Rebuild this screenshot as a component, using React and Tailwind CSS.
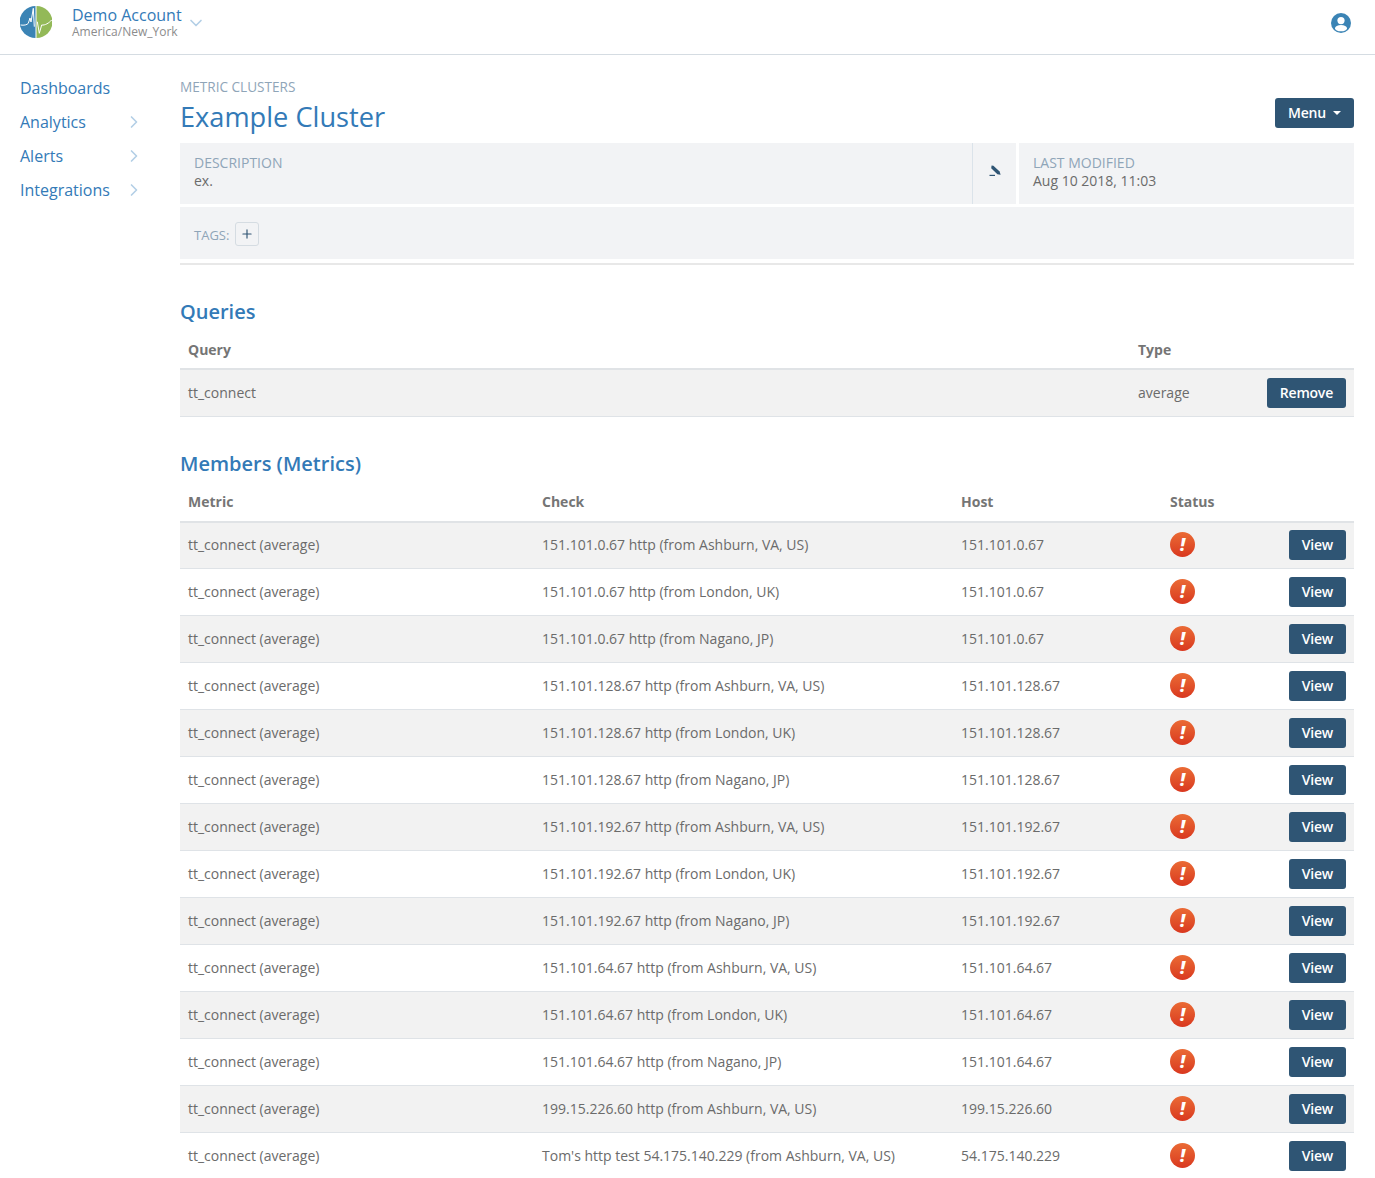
import React from 'react';
import { ChevronDown, ChevronRight, Plus } from 'lucide-react';

const members = [
  ['151.101.0.67 http (from Ashburn, VA, US)', '151.101.0.67'],
  ['151.101.0.67 http (from London, UK)', '151.101.0.67'],
  ['151.101.0.67 http (from Nagano, JP)', '151.101.0.67'],
  ['151.101.128.67 http (from Ashburn, VA, US)', '151.101.128.67'],
  ['151.101.128.67 http (from London, UK)', '151.101.128.67'],
  ['151.101.128.67 http (from Nagano, JP)', '151.101.128.67'],
  ['151.101.192.67 http (from Ashburn, VA, US)', '151.101.192.67'],
  ['151.101.192.67 http (from London, UK)', '151.101.192.67'],
  ['151.101.192.67 http (from Nagano, JP)', '151.101.192.67'],
  ['151.101.64.67 http (from Ashburn, VA, US)', '151.101.64.67'],
  ['151.101.64.67 http (from London, UK)', '151.101.64.67'],
  ['151.101.64.67 http (from Nagano, JP)', '151.101.64.67'],
  ['199.15.226.60 http (from Ashburn, VA, US)', '199.15.226.60'],
  ["Tom's http test 54.175.140.229 (from Ashburn, VA, US)", '54.175.140.229'],
];

const Logo = () => (
  <svg width="32" height="32" viewBox="0 0 32 32">
    <path d="M15.5 0A16 16 0 0 0 15.5 32Z" fill="#3b84b5" />
    <path d="M16.5 0A16 16 0 0 1 16.5 32Z" fill="#93b958" />
    <path d="M0.5 19C4 19.5 7 19 8.3 17.3L10 12L11 16L13.3 2.3L14.3 20.7" fill="none" stroke="#fff" strokeWidth="1" />
    <path d="M17.3 15.7L19.3 27.3L21.7 19C25 19.5 29 17 31.7 14" fill="none" stroke="#fff" strokeWidth="1" />
  </svg>
);

const UserIcon = () => (
  <svg width="20" height="20" viewBox="0 0 20 20">
    <circle cx="10" cy="10" r="10" fill="#3b84b5" />
    <circle cx="10" cy="7.6" r="3.6" fill="#fff" />
    <ellipse cx="10" cy="15.2" rx="6" ry="3.1" fill="#fff" />
  </svg>
);

const PenIcon = () => (
  <svg width="12" height="12" viewBox="0 0 12 12" fill="#2f5574">
    <path d="M2.6 0.6L4.4 0.8L10.6 6.6L11.6 9.8L8.4 9.2L2.2 3.2Z" />
    <rect x="0.5" y="9.8" width="5.5" height="1.2" />
  </svg>
);

const AlertIcon = () => (
  <span className="mb-[2px] flex h-[25px] w-[25px] items-center justify-center rounded-full bg-gradient-to-b from-[#ea6a35] to-[#d9371f] text-[17px] leading-none font-extrabold text-white italic">
    !
  </span>
);

const SolidButton = ({ children }) => (
  <button className="h-[30px] rounded-[3px] bg-[#2f5574] px-[13px] text-sm font-semibold tracking-[-0.015em] text-white">
    {children}
  </button>
);

const Th = ({ children }) => (
  <th className="h-[38px] px-2 text-left align-middle text-sm font-bold text-[#757575]">{children}</th>
);

const Sidebar = () => (
  <nav className="w-[180px] shrink-0 pt-4 pl-5">
    {['Dashboards', 'Analytics', 'Alerts', 'Integrations'].map((item, i) => (
      <div key={item} className="flex h-[34px] items-center text-base text-[#337ab7]">
        <span className="w-[104px]">{item}</span>
        {i > 0 && <ChevronRight className="h-5 w-5 text-[#b3cfe6]" strokeWidth={2} />}
      </div>
    ))}
  </nav>
);

export default function App() {
  return (
    <div className="min-h-screen bg-white text-sm text-[#6b6b6b] [font-family:'Open_Sans',sans-serif]">
      <header className="flex h-[55px] items-start justify-between border-b border-[#d5dce2] pr-6 pl-5">
        <div className="flex pt-[6px]">
          <Logo />
          <div className="ml-5 -mt-[1px]">
            <div className="flex items-center text-base leading-[20px] text-[#337ab7]">
              Demo Account
              <ChevronDown className="mt-2 -mb-2 ml-[4px] h-5 w-5 text-[#b3cfe6]" strokeWidth={2} />
            </div>
            <div className="text-xs leading-[14px] text-[#8c8c8c]">America/New_York</div>
          </div>
        </div>
        <div className="pt-[13px]">
          <UserIcon />
        </div>
      </header>

      <div className="flex">
        <Sidebar />
        <main className="w-[1174px]">
          <div className="flex items-end justify-between">
            <div>
              <div className="pt-[22px] text-[13.6px] leading-[20px] text-[#8fa5b8] uppercase">Metric Clusters</div>
              <h1 className="mt-[2px] text-[27.2px] leading-[36px] text-[#337ab7]">Example Cluster</h1>
            </div>
            <button className="mb-[7px] flex h-[30px] items-center rounded-[3px] bg-[#2f5574] px-[13px] text-sm font-semibold tracking-[-0.015em] text-white">
              Menu
              <span className="ml-[7px] h-0 w-0 border-x-[4px] border-t-[4px] border-x-transparent border-t-white" />
            </button>
          </div>

          <div className="mt-[8px] flex h-[61px] gap-[3px]">
            <div className="flex flex-1 bg-[#f2f3f5]">
              <div className="flex-1 px-[14px] pt-[11px] leading-[18px]">
                <div className="text-[#8fa5b8] uppercase">Description</div>
                <div>ex.</div>
              </div>
              <div className="flex w-[44px] items-center justify-center border-l border-[#dbe3ea] pb-[5px]">
                <PenIcon />
              </div>
            </div>
            <div className="w-[335px] bg-[#f2f3f5] px-[14px] pt-[11px] leading-[18px]">
              <div className="text-[#8fa5b8] uppercase">Last Modified</div>
              <div>Aug 10 2018, 11:03</div>
            </div>
          </div>

          <div className="mt-[3px] flex h-[52px] items-center bg-[#f2f3f5] px-[14px] pt-[2px]">
            <span className="mt-[2px] text-[13px] text-[#8fa5b8]">TAGS:</span>
            <span className="ml-[6px] flex h-6 w-6 items-center justify-center rounded-[3px] border border-[#d5dce2]">
              <Plus className="h-[14px] w-[14px] text-[#2f5574]" strokeWidth={2} />
            </span>
          </div>
          <div className="mt-[4px] h-[2px] bg-[#e8e8e8]" />

          <h2 className="mt-[33px] text-xl leading-[28px] font-semibold text-[#337ab7]">Queries</h2>
          <table className="mt-[5px] w-full table-fixed border-collapse">
            <colgroup>
              <col className="w-[950px]" />
              <col />
              <col className="w-[100px]" />
            </colgroup>
            <thead>
              <tr className="border-b-2 border-[#e0e3e6]">
                <Th>Query</Th>
                <Th>Type</Th>
                <Th />
              </tr>
            </thead>
            <tbody>
              <tr className="h-[47px] border-b border-[#dfe3e7] bg-[#f2f2f2]">
                <td className="px-2">tt_connect</td>
                <td className="px-2">average</td>
                <td className="px-2 text-right">
                  <SolidButton>Remove</SolidButton>
                </td>
              </tr>
            </tbody>
          </table>

          <h2 className="mt-[33px] text-xl leading-[28px] font-semibold text-[#337ab7]">Members (Metrics)</h2>
          <table className="mt-[6px] w-full table-fixed border-collapse">
            <colgroup>
              <col className="w-[354px]" />
              <col className="w-[419px]" />
              <col className="w-[209px]" />
              <col className="w-[60px]" />
              <col />
            </colgroup>
            <thead>
              <tr className="border-b-2 border-[#e0e3e6]">
                <Th>Metric</Th>
                <Th>Check</Th>
                <Th>Host</Th>
                <Th>Status</Th>
                <Th />
              </tr>
            </thead>
            <tbody>
              {members.map(([check, host], i) => (
                <tr key={check} className={`h-[47px] border-b border-[#dfe3e7] ${i % 2 === 0 ? 'bg-[#f2f2f2]' : 'bg-white'}`}>
                  <td className="px-2">tt_connect (average)</td>
                  <td className="px-2 whitespace-nowrap">{check}</td>
                  <td className="px-2">{host}</td>
                  <td className="px-2">
                    <AlertIcon />
                  </td>
                  <td className="px-2 text-right">
                    <SolidButton>View</SolidButton>
                  </td>
                </tr>
              ))}
            </tbody>
          </table>
        </main>
      </div>
    </div>
  );
}
